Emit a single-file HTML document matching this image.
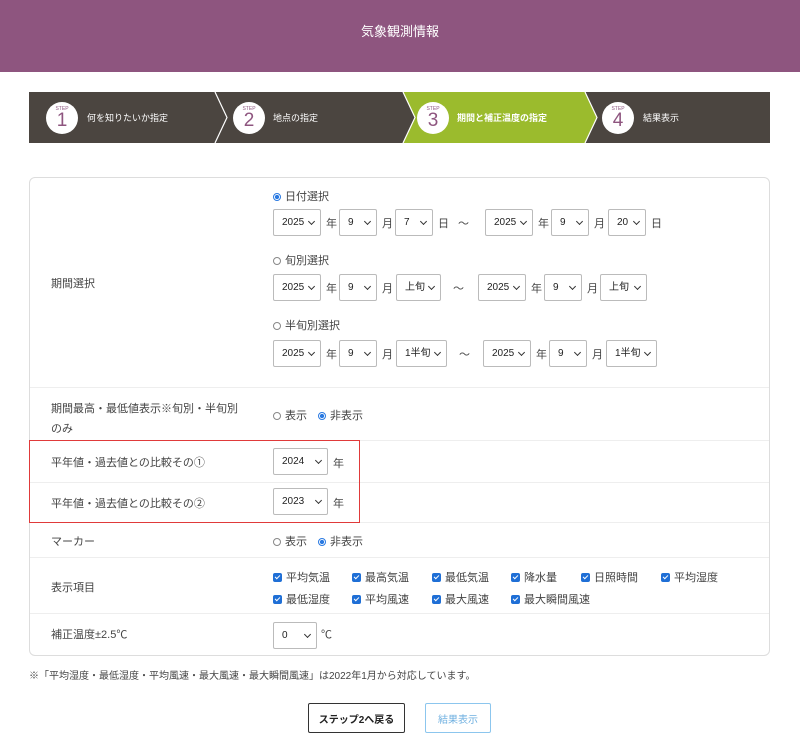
<!DOCTYPE html><html><head><meta charset="utf-8"><style>
*{box-sizing:border-box;margin:0;padding:0}
body{width:800px;height:756px;background:#fff;font-family:"Liberation Sans","Noto Sans CJK JP",sans-serif;color:#333;font-size:11px;position:relative;overflow:hidden}
.a{position:absolute;white-space:nowrap}
.hd{left:0;top:0;width:800px;height:72px;background:#8e557f;color:#fff;font-size:13px;text-align:center;line-height:64px}
.sel{position:absolute;height:27px;border:1px solid #bbb;border-radius:2px;background:#fff;font-size:10px;line-height:25px;padding-left:8px;color:#222}
.sel:after{content:"";position:absolute;right:6px;top:9px;width:4px;height:4px;border-right:1.5px solid #333;border-bottom:1.5px solid #333;transform:rotate(45deg)}
.t{font-size:11px;color:#444}
.rad{display:inline-block;width:8px;height:8px;border:1px solid #888;border-radius:50%;vertical-align:-1px;margin-right:4px}
.rad.on{border:1px solid #2a7ae2;background:radial-gradient(#2a7ae2 45%,#fff 55%)}
.cb{display:inline-block;width:9px;height:9px;background:#1f6fd6;border-radius:2px;vertical-align:-1px;margin-right:4px;position:relative}
.cb:after{content:"";position:absolute;left:3px;top:1px;width:2px;height:4px;border-right:1.5px solid #fff;border-bottom:1.5px solid #fff;transform:rotate(45deg)}
.ln{position:absolute;left:30px;width:739px;height:1px;background:#eee}
.circ{position:absolute;width:32px;height:32px;border-radius:50%;background:#fff;top:102px;text-align:center;color:#8e557f}
.circ b{display:block;font-size:5px;margin-top:4px;font-weight:normal}
.circ i{display:block;font-style:normal;font-size:19px;line-height:17px}
.sl{position:absolute;top:111px;color:#fff;font-size:9px}
.btn{position:absolute;display:flex;align-items:center;justify-content:center;font-size:10px;border-radius:2px}
</style></head><body>
<div class="a hd">気象観測情報</div>
<svg class="a" style="left:29px;top:92px" width="741" height="51">
<rect width="741" height="51" fill="#4b4540"/>
<polygon points="374,0 556,0 568,25.5 556,51 374,51 386,25.5" fill="#9bbb2d"/>
<polyline points="186,0 198,25.5 186,51" fill="none" stroke="#fff" stroke-width="1.2"/>
<polyline points="374,0 386,25.5 374,51" fill="none" stroke="#fff" stroke-width="1.2"/>
<polyline points="556,0 568,25.5 556,51" fill="none" stroke="#fff" stroke-width="1.2"/>
</svg>
<div class="circ" style="left:46px"><b>STEP</b><i>1</i></div>
<div class="circ" style="left:233px"><b>STEP</b><i>2</i></div>
<div class="circ" style="left:417px"><b>STEP</b><i>3</i></div>
<div class="circ" style="left:602px"><b>STEP</b><i>4</i></div>
<div class="sl" style="left:87px">何を知りたいか指定</div>
<div class="sl" style="left:273px">地点の指定</div>
<div class="sl" style="left:457px;font-weight:bold">期間と補正温度の指定</div>
<div class="sl" style="left:643px">結果表示</div>

<div class="a" style="left:29px;top:177px;width:741px;height:479px;border:1px solid #ddd;border-radius:6px"></div>
<div class="ln" style="top:387px"></div><div class="ln" style="top:440px"></div><div class="ln" style="top:482px"></div><div class="ln" style="top:522px"></div><div class="ln" style="top:557px"></div><div class="ln" style="top:613px"></div>
<div class="a" style="left:29px;top:440px;width:331px;height:83px;border:1px solid #e03a3a"></div>

<div class="a t" style="left:51px;top:275px">期間選択</div>
<div class="a t" style="left:51px;top:399px;line-height:20px;white-space:normal;width:190px">期間最高・最低値表示※旬別・半旬別のみ</div>
<div class="a t" style="left:51px;top:454px">平年値・過去値との比較その①</div>
<div class="a t" style="left:51px;top:495px">平年値・過去値との比較その②</div>
<div class="a t" style="left:51px;top:533px">マーカー</div>
<div class="a t" style="left:51px;top:579px">表示項目</div>
<div class="a t" style="left:51px;top:626px">補正温度±2.5℃</div>

<div class="a t" style="left:273px;top:188px"><span class="rad on"></span>日付選択</div>
<div class="a t" style="left:273px;top:252px"><span class="rad"></span>旬別選択</div>
<div class="a t" style="left:273px;top:317px"><span class="rad"></span>半旬別選択</div>

<div class="sel" style="left:273px;top:209px;width:48px">2025</div><div class="a t" style="left:326px;top:215px">年</div>
<div class="sel" style="left:339px;top:209px;width:38px">9</div><div class="a t" style="left:382px;top:215px">月</div>
<div class="sel" style="left:395px;top:209px;width:38px">7</div><div class="a t" style="left:438px;top:215px">日</div>
<div class="a t" style="left:458px;top:215px">〜</div>
<div class="sel" style="left:485px;top:209px;width:48px">2025</div><div class="a t" style="left:538px;top:215px">年</div>
<div class="sel" style="left:551px;top:209px;width:38px">9</div><div class="a t" style="left:594px;top:215px">月</div>
<div class="sel" style="left:608px;top:209px;width:38px">20</div><div class="a t" style="left:651px;top:215px">日</div>

<div class="sel" style="left:273px;top:274px;width:48px">2025</div><div class="a t" style="left:326px;top:280px">年</div>
<div class="sel" style="left:339px;top:274px;width:38px">9</div><div class="a t" style="left:382px;top:280px">月</div>
<div class="sel" style="left:396px;top:274px;width:45px">上旬</div>
<div class="a t" style="left:453px;top:280px">〜</div>
<div class="sel" style="left:478px;top:274px;width:48px">2025</div><div class="a t" style="left:531px;top:280px">年</div>
<div class="sel" style="left:544px;top:274px;width:38px">9</div><div class="a t" style="left:587px;top:280px">月</div>
<div class="sel" style="left:600px;top:274px;width:47px">上旬</div>

<div class="sel" style="left:273px;top:340px;width:48px">2025</div><div class="a t" style="left:326px;top:346px">年</div>
<div class="sel" style="left:339px;top:340px;width:38px">9</div><div class="a t" style="left:382px;top:346px">月</div>
<div class="sel" style="left:396px;top:340px;width:51px">1半旬</div>
<div class="a t" style="left:459px;top:346px">〜</div>
<div class="sel" style="left:483px;top:340px;width:48px">2025</div><div class="a t" style="left:536px;top:346px">年</div>
<div class="sel" style="left:549px;top:340px;width:38px">9</div><div class="a t" style="left:592px;top:346px">月</div>
<div class="sel" style="left:606px;top:340px;width:51px">1半旬</div>

<div class="a t" style="left:273px;top:407px"><span class="rad"></span>表示　<span class="rad on"></span>非表示</div>
<div class="sel" style="left:273px;top:448px;width:55px">2024</div><div class="a t" style="left:333px;top:455px">年</div>
<div class="sel" style="left:273px;top:488px;width:55px">2023</div><div class="a t" style="left:333px;top:495px">年</div>
<div class="a t" style="left:273px;top:533px"><span class="rad"></span>表示　<span class="rad on"></span>非表示</div>

<div class="a t" style="left:273px;top:569px"><span class="cb"></span>平均気温</div>
<div class="a t" style="left:352px;top:569px"><span class="cb"></span>最高気温</div>
<div class="a t" style="left:432px;top:569px"><span class="cb"></span>最低気温</div>
<div class="a t" style="left:511px;top:569px"><span class="cb"></span>降水量</div>
<div class="a t" style="left:581px;top:569px"><span class="cb"></span>日照時間</div>
<div class="a t" style="left:661px;top:569px"><span class="cb"></span>平均湿度</div>
<div class="a t" style="left:273px;top:591px"><span class="cb"></span>最低湿度</div>
<div class="a t" style="left:352px;top:591px"><span class="cb"></span>平均風速</div>
<div class="a t" style="left:432px;top:591px"><span class="cb"></span>最大風速</div>
<div class="a t" style="left:511px;top:591px"><span class="cb"></span>最大瞬間風速</div>

<div class="sel" style="left:273px;top:622px;width:44px">0</div><div class="a t" style="left:321px;top:626px">℃</div>

<div class="a" style="left:29px;top:667px;font-size:10px;color:#444">※「平均湿度・最低湿度・平均風速・最大風速・最大瞬間風速」は2022年1月から対応しています。</div>
<div class="btn" style="left:308px;top:703px;width:97px;height:30px;border:1.5px solid #333;font-weight:bold;color:#222">ステップ2へ戻る</div>
<div class="btn" style="left:425px;top:703px;width:66px;height:30px;border:1px solid #8cc6ee;color:#6fb0e0">結果表示</div>
</body></html>
